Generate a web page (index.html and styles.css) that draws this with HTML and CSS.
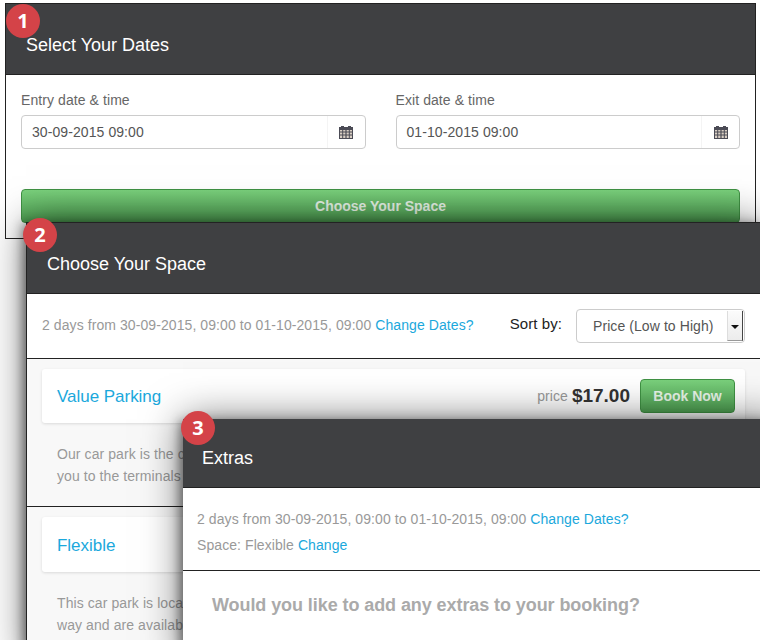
FILE: index.html
```html
<!DOCTYPE html>
<html lang="en">
<head>
<meta charset="utf-8">
<title>Booking steps</title>
<link rel="stylesheet" href="styles.css">
</head>
<body>
<section class="panel panel-dates">
  <span class="badge">1</span>
  <header class="panel-head"><h2>Select Your Dates</h2></header>
  <div class="dates-body">
    <div class="date-fields">
      <div class="field">
        <label>Entry date &amp; time</label>
        <div class="input-group"><span class="input-value">30-09-2015 09:00</span><span class="addon"><svg class="cal" viewBox="0 0 14 14"><path fill="#4b4b55" d="M2 1h3v2H2zM9 1h3v2H9z"/><path fill="#4b4b55" d="M0 2h14v12H0z"/><path fill="#d9cfc4" d="M1 5h2.2v1.6H1zM4.2 5h2.2v1.6H4.2zM7.6 5h2.2v1.6H7.6zM10.8 5H13v1.6h-2.2zM1 7.6h2.2v1.8H1zM4.2 7.6h2.2v1.8H4.2zM7.6 7.6h2.2v1.8H7.6zM10.8 7.6H13v1.8h-2.2zM1 10.4h2.2V13H1zM4.2 10.4h2.2V13H4.2zM7.6 10.4h2.2V13H7.6zM10.8 10.4H13V13h-2.2z"/></svg></span></div>
      </div>
      <div class="field">
        <label>Exit date &amp; time</label>
        <div class="input-group"><span class="input-value">01-10-2015 09:00</span><span class="addon"><svg class="cal" viewBox="0 0 14 14"><path fill="#4b4b55" d="M2 1h3v2H2zM9 1h3v2H9z"/><path fill="#4b4b55" d="M0 2h14v12H0z"/><path fill="#d9cfc4" d="M1 5h2.2v1.6H1zM4.2 5h2.2v1.6H4.2zM7.6 5h2.2v1.6H7.6zM10.8 5H13v1.6h-2.2zM1 7.6h2.2v1.8H1zM4.2 7.6h2.2v1.8H4.2zM7.6 7.6h2.2v1.8H7.6zM10.8 7.6H13v1.8h-2.2zM1 10.4h2.2V13H1zM4.2 10.4h2.2V13H4.2zM7.6 10.4h2.2V13H7.6zM10.8 10.4H13V13h-2.2z"/></svg></span></div>
      </div>
    </div>
    <a class="btn btn-wide">Choose Your Space</a>
  </div>
</section>

<section class="panel panel-space">
  <span class="badge">2</span>
  <header class="panel-head"><h2>Choose Your Space</h2></header>
  <div class="space-info">
    <p class="info">2 days from 30-09-2015, 09:00 to 01-10-2015, 09:00 <a>Change Dates?</a></p>
    <div class="sort">
      <span class="sort-label">Sort by:</span>
      <div class="select"><span class="select-value">Price (Low to High)</span><span class="select-arrow"></span></div>
    </div>
  </div>
  <article class="option option-first">
    <div class="option-card">
      <a class="option-name">Value Parking</a>
      <div class="option-buy"><span class="price-label">price</span><strong class="price">$17.00</strong><a class="btn btn-book">Book Now</a></div>
    </div>
    <p class="option-text">Our car park is the c<br>you to the terminals</p>
  </article>
  <article class="option option-second">
    <div class="option-card">
      <a class="option-name">Flexible</a>
    </div>
    <p class="option-text">This car park is locat<br>way and are availabl</p>
  </article>
</section>

<section class="panel panel-extras">
  <span class="badge">3</span>
  <header class="panel-head"><h2>Extras</h2></header>
  <div class="extras-info">
    <p class="info">2 days from 30-09-2015, 09:00 to 01-10-2015, 09:00 <a>Change Dates?</a></p>
    <p class="info">Space: Flexible <a>Change</a></p>
  </div>
  <h3 class="extras-title">Would you like to add any extras to your booking?</h3>
</section>
</body>
</html>
```
FILE: styles.css
```css
* { box-sizing: border-box; }
html, body { margin: 0; height: 100%; }
body {
  position: relative;
  width: 760px;
  height: 640px;
  overflow: hidden;
  background: #fff;
  font-family: "Liberation Sans", Arial, sans-serif;
  font-size: 14px;
  letter-spacing: .08px;
  color: #333;
}
p, h2, h3 { margin: 0; }
a { color: #1ba8dc; }

.panel {
  position: absolute;
  background: #fff;
  border: 1px solid #222;
  box-shadow: -3px 2px 10px rgba(0, 0, 0, .45), 0 0 38px rgba(0, 0, 0, .55);
}
.panel-dates { left: 5px; top: 3px; width: 751px; height: 236px; box-shadow: none; }
.panel-space { left: 26px; top: 222px; width: 735px; height: 440px; background: #f8f8f8; }
.panel-extras { left: 183px; top: 419px; width: 600px; height: 240px; border-top: 0; border-left: 0; }

.badge {
  position: absolute;
  width: 34px;
  height: 34px;
  border-radius: 50%;
  background: #d44348;
  color: #fff;
  font: 700 20px/34px "Open Sans", sans-serif;
  letter-spacing: 0;
  text-align: center;
}
.panel-dates .badge { left: 0; top: 0; }
.panel-space .badge { left: -4px; top: -5px; }
.panel-extras .badge { left: -2px; top: -8px; }

.panel-head {
  height: 71px;
  padding: 31px 20px 0;
  background: #3f4042;
  border-bottom: 1px solid #222;
}
.panel-head h2 {
  font-size: 18px;
  line-height: 20px;
  font-weight: 400;
  letter-spacing: 0;
  color: #fff;
}
.panel-extras .panel-head { height: 69px; padding: 29px 19px 0; }

.dates-body { padding: 15px 15px 0; background: #fff; }
.date-fields { display: flex; gap: 30px; }
.field { flex: 1; }
.field label { display: block; height: 20px; line-height: 20px; margin-bottom: 5px; color: #666; }
.input-group {
  display: flex;
  height: 34px;
  border: 1px solid #ccc;
  border-radius: 4px;
  color: #555;
}
.input-value { flex: 1; padding: 0 10px; line-height: 32px; }
.addon {
  display: flex;
  align-items: center;
  justify-content: center;
  width: 38px;
  border-left: 1px solid #f4f4f4;
}
.cal { width: 14px; height: 14px; }

.btn {
  display: block;
  border: 1px solid #3f9143;
  border-radius: 4px;
  background: linear-gradient(#7ad07c, #4fa053);
  color: #e8f5e8;
  font-weight: 700;
  letter-spacing: 0;
  text-align: center;
  line-height: 32px;
}
.btn-wide { height: 34px; margin-top: 40px; }
.btn-book { width: 95px; height: 34px; margin-left: 10px; }

.space-info {
  display: flex;
  align-items: center;
  justify-content: space-between;
  height: 65px;
  padding: 0 15px;
  background: #fff;
  border-bottom: 1px solid #222;
}
.info { color: #999; position: relative; top: -1px; }
.sort { display: flex; align-items: center; gap: 14px; }
.sort-label { color: #222; font-size: 15px; position: relative; top: -3px; }
.select {
  display: flex;
  width: 169px;
  height: 34px;
  padding: 1px;
  border: 1px solid #ccc;
  border-radius: 4px;
  background: #fff;
  color: #555;
}
.select-value { flex: 1; padding-left: 15px; line-height: 30px; }
.select-arrow {
  position: relative;
  width: 16px;
  background: linear-gradient(#fbfbfb, #ececec);
  border-left: 1px solid #ddd;
  border-right: 1px solid #444;
  border-bottom: 1px solid #999;
}
.select-arrow::after {
  content: "";
  position: absolute;
  left: 3px;
  top: 14px;
  border: 4px solid transparent;
  border-bottom: 0;
  border-top-color: #111;
}

.option { padding: 10px 15px 0; height: 148px; border-bottom: 1px solid #222; }
.option-second { border-bottom: 0; }
.option-card {
  display: flex;
  align-items: center;
  justify-content: space-between;
  height: 54px;
  padding: 0 10px 0 15px;
  background: #fff;
  border-radius: 3px;
  box-shadow: 0 1px 3px rgba(0, 0, 0, .12);
}
.option-second .option-card { height: 55px; padding-top: 2px; }
.option-name { font-size: 17px; letter-spacing: -.03px; padding-top: 2px; }
.option-second .option-name { padding-top: 0; }
.option-buy { display: flex; align-items: center; }
.price-label { color: #999; }
.price { margin-left: 4px; font-size: 19px; letter-spacing: 0; color: #333; }
.option-text { padding: 20px 15px 0; color: #999; line-height: 22px; }

.extras-info {
  height: 83px;
  padding: 19px 14px 0;
  border-bottom: 1px solid #222;
}
.extras-info .info { line-height: 26px; }
.extras-title {
  padding: 24px 29px 0;
  font-size: 18px;
  line-height: 20px;
  letter-spacing: -.08px;
  color: #aaa;
}
```
